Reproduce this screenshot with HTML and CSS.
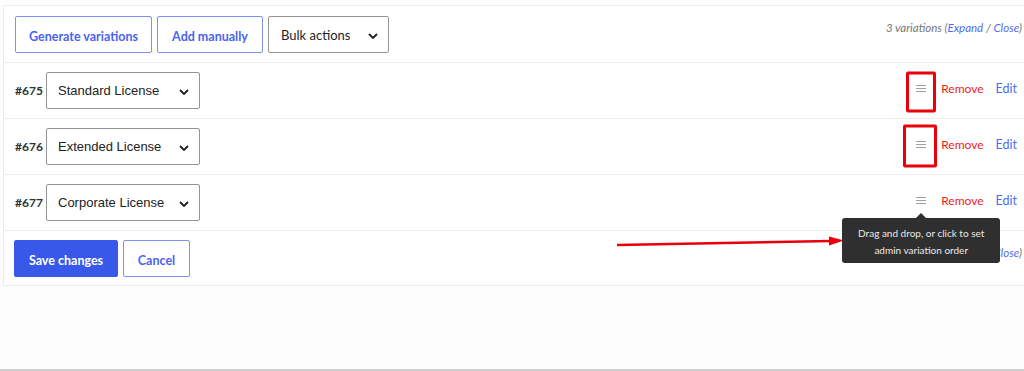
FILE: index.html
```html
<!DOCTYPE html>
<html lang="en">
<head>
    <meta charset="UTF-8">
    <meta name="viewport" content="width=device-width, initial-scale=1.0">
    <title>Variations</title>

    <link rel="stylesheet" href="styles.css">
</head>
<body>
    <div class="panel">
        <!-- Toolbar -->
        <div class="toolbar">
            <button class="btn btn-outline btn-generate">Generate variations</button>
            <button class="btn btn-outline btn-add">Add manually</button>
            <div class="select select-bulk">
                <span>Bulk actions</span>
                <svg class="chevron" viewBox="0 0 10 6" width="10" height="6"><path d="M1 1l4 4 4-4" fill="none" stroke="#1e1e1e" stroke-width="1.8"/></svg>
            </div>
            <p class="count">3 variations (<a href="#">Expand</a> / <a href="#">Close</a>)</p>
        </div>

        <!-- Variation rows -->
        <div class="row">
            <span class="num">#675</span>
            <div class="select select-license">
                <span>Standard License</span>
                <svg class="chevron" viewBox="0 0 10 6" width="10" height="6"><path d="M1 1l4 4 4-4" fill="none" stroke="#1e1e1e" stroke-width="1.8"/></svg>
            </div>
            <div class="actions">
                <span class="handle">
                    <svg viewBox="0 0 10 7" width="10" height="7"><path d="M0 0.5h10M0 3.5h10M0 6.5h10" stroke="#a0a0a0" stroke-width="1"/></svg>
                    <span class="mark"></span>
                </span>
                <a href="#" class="remove">Remove</a>
                <a href="#" class="edit">Edit</a>
            </div>
        </div>

        <div class="row">
            <span class="num">#676</span>
            <div class="select select-license">
                <span>Extended License</span>
                <svg class="chevron" viewBox="0 0 10 6" width="10" height="6"><path d="M1 1l4 4 4-4" fill="none" stroke="#1e1e1e" stroke-width="1.8"/></svg>
            </div>
            <div class="actions">
                <span class="handle">
                    <svg viewBox="0 0 10 7" width="10" height="7"><path d="M0 0.5h10M0 3.5h10M0 6.5h10" stroke="#a0a0a0" stroke-width="1"/></svg>
                    <span class="mark mark-wide"></span>
                </span>
                <a href="#" class="remove">Remove</a>
                <a href="#" class="edit">Edit</a>
            </div>
        </div>

        <div class="row">
            <span class="num">#677</span>
            <div class="select select-license">
                <span>Corporate License</span>
                <svg class="chevron" viewBox="0 0 10 6" width="10" height="6"><path d="M1 1l4 4 4-4" fill="none" stroke="#1e1e1e" stroke-width="1.8"/></svg>
            </div>
            <div class="actions">
                <span class="handle">
                    <svg viewBox="0 0 10 7" width="10" height="7"><path d="M0 0.5h10M0 3.5h10M0 6.5h10" stroke="#a0a0a0" stroke-width="1"/></svg>
                    <span class="tooltip">Drag and drop, or click to set<br>admin variation order</span>
                </span>
                <a href="#" class="remove">Remove</a>
                <a href="#" class="edit">Edit</a>
            </div>
        </div>

        <!-- Footer -->
        <div class="toolbar footer">
            <button class="btn btn-primary btn-save">Save changes</button>
            <button class="btn btn-outline btn-cancel">Cancel</button>
            <p class="count">3 variations (<a href="#">Expand</a> / <a href="#">Close</a>)</p>
        </div>
    </div>

    <!-- Annotation arrow -->
    <svg class="arrow" viewBox="0 0 232 14" width="232" height="14">
        <path d="M2 10L216 6" stroke="#e8000b" stroke-width="2.5" fill="none"/>
        <path d="M214 1.5L229 5.5L214 10.5z" fill="#e8000b"/>
    </svg>
</body>
</html>
```

FILE: styles.css
```css
* {
    margin: 0;
    padding: 0;
    box-sizing: border-box;
}

body {
    font-family: Lato, 'Noto Sans', sans-serif;
    font-size: 12px;
    color: #1e1e1e;
    background: #fdfdfd;
    min-height: 100vh;
    border-bottom: 2px solid #cfcfcf;
    position: relative;
    overflow: hidden;
}

a {
    text-decoration: none;
}

/* Main panel */
.panel {
    margin: 5px 0 0 3px;
    background: #fff;
    border-top: 1px solid #ececec;
    border-left: 1px solid #ececec;
}

/* Top and bottom toolbars */
.toolbar {
    display: flex;
    align-items: center;
    gap: 5px;
    padding: 10px 2px 9px 11px;
    border-bottom: 1px solid #ececec;
}

.footer {
    padding: 9px 2px 8px 10px;
}

.count {
    margin-left: auto;
    align-self: flex-start;
    margin-top: 5px;
    font-style: italic;
    font-size: 11.5px;
    color: #757575;
}

.footer .count {
    margin-top: 6px;
}

.count a {
    color: #4f6cf0;
}

/* Buttons */
.btn {
    height: 37px;
    padding-top: 3px;
    font-family: Lato, 'Noto Sans', sans-serif;
    font-size: 12.5px;
    font-weight: 700;
    border-radius: 2px;
    cursor: pointer;
    background: #fff;
}

.btn-outline {
    border: 1px solid #7d90f3;
    color: #4a63ee;
}

.btn-primary {
    border: 1px solid #3858e9;
    background: #3858e9;
    color: #fff;
}

.btn-generate { width: 137px; }
.btn-add { width: 106px; }
.btn-save { width: 104px; }
.btn-cancel { width: 67px; }

/* Select boxes */
.select {
    display: flex;
    align-items: center;
    justify-content: space-between;
    height: 37px;
    background: #fff;
    border: 1px solid #949494;
    border-radius: 2px;
}

.select-bulk {
    width: 121px;
    padding: 0 10px 0 12px;
    font-size: 13px;
    color: #1e1e1e;
}

.select-license {
    width: 154px;
    padding: 0 10px 0 11px;
    font-family: 'Liberation Sans', Arial, sans-serif;
    font-size: 13px;
    color: #222;
}

.chevron {
    margin-top: 2px;
}

/* Variation rows */
.row {
    display: flex;
    align-items: center;
    padding: 9px 7px 9px 11px;
    border-bottom: 1px solid #ececec;
}

.num {
    width: 31px;
    font-weight: 700;
    font-size: 12px;
    color: #2c3338;
}

.actions {
    margin-left: auto;
    display: flex;
    align-items: center;
    font-size: 12.5px;
}

.handle {
    position: relative;
    display: flex;
    margin-right: 15px;
}

.remove {
    font-size: 12px;
    color: #f21b1b;
    margin-right: 12px;
    margin-top: -4px;
}

.edit {
    color: #4f6cf0;
    margin-top: -4px;
}

.handle svg {
    margin-top: -4px;
}

/* Red annotation boxes */
.mark {
    position: absolute;
    left: 50%;
    top: 50%;
    width: 30px;
    height: 41px;
    transform: translate(-50%, -50%);
    margin-top: 1px;
    border: 3px solid #e8000b;
    border-radius: 2px;
}

.mark-wide {
    width: 34px;
    height: 43px;
    margin-top: -1px;
    margin-left: -1px;
}

/* Tooltip */
.tooltip {
    position: absolute;
    top: 17px;
    left: 50%;
    transform: translateX(-50%);
    width: 158px;
    padding: 7px 0 4px;
    background: #2f2f2f;
    color: #eaeaea;
    border-radius: 3px;
    font-size: 10px;
    line-height: 17px;
    text-align: center;
    white-space: nowrap;
    z-index: 2;
}

.tooltip::before {
    content: '';
    position: absolute;
    top: -5px;
    left: 50%;
    margin-left: -5px;
    border-left: 5px solid transparent;
    border-right: 5px solid transparent;
    border-bottom: 5px solid #2f2f2f;
}

.arrow {
    position: absolute;
    left: 615px;
    top: 235px;
}
```
